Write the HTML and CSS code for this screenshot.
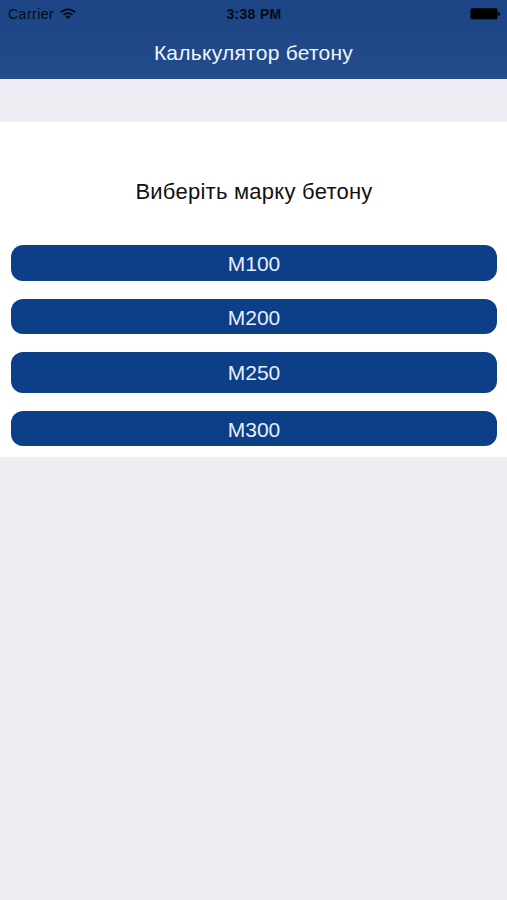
FILE: index.html
```
<!DOCTYPE html>
<html lang="uk">
<head>
  <meta charset="UTF-8">
  <title>Калькулятор бетону</title>
  <link rel="stylesheet" href="styles.css">
</head>
<body>

<header class="header">
  <div class="status-bar">
    <div class="carrier">
      <span class="carrier-name">Carrier</span>
      <svg class="wifi" viewBox="0 0 16 12" width="16" height="12">
        <g fill="none" stroke="#030b18" stroke-width="1.9">
          <path d="M1 4.2a10 10 0 0 1 14 0"/>
          <path d="M3.6 6.9a6.3 6.3 0 0 1 8.8 0"/>
        </g>
        <path d="M8 11.2L5.5 8.7a3.6 3.6 0 0 1 5 0z" fill="#030b18"/>
      </svg>
    </div>
    <span class="time">3:38 PM</span>
    <div class="battery-wrap">
      <svg width="30" height="12" viewBox="0 0 30 12">
        <rect x="0.5" y="0.3" width="27" height="11" rx="1.5" fill="#000"/>
        <path d="M28.2 4a2 2 0 0 1 0 4z" fill="#000"/>
      </svg>
    </div>
  </div>
  <h1 class="title">Калькулятор бетону</h1>
</header>

<main class="panel">
  <p class="prompt">Виберіть марку бетону</p>
  <div class="grades">
    <button class="grade">М100</button>
    <button class="grade">М200</button>
    <button class="grade grade-tall">М250</button>
    <button class="grade">М300</button>
  </div>
</main>

</body>
</html>
```
FILE: styles.css
```
body {
  margin: 0;
  min-height: 100vh;
  background: #efeef4;
  font-family: "Liberation Sans", Arial, sans-serif;
}

.header {
  height: 79px;
  background: linear-gradient(#1d4484, #234c8c);
}

/* Status bar */
.status-bar {
  display: grid;
  grid-template-columns: 1fr auto 1fr;
  align-items: center;
  height: 27px;
  padding: 0 7px 0 8px;
  font-size: 14px;
  line-height: 28px;
  color: #030b18;
}

.carrier {
  display: flex;
  align-items: center;
  gap: 6px;
}

.carrier-name {
  letter-spacing: 0.5px;
}

.time {
  font-weight: bold;
  font-size: 14px;
  letter-spacing: 0.3px;
}

.battery-wrap {
  display: flex;
  justify-content: flex-end;
}

.title {
  margin: 0;
  text-align: center;
  font-size: 21px;
  font-weight: normal;
  line-height: 52px;
  letter-spacing: 0.25px;
  color: #f0f5ff;
}

/* Panel */
.panel {
  box-sizing: border-box;
  height: 335px;
  margin-top: 43px;
  padding: 54px 10px 0 11px;
  background: #fff;
}

.prompt {
  margin: 0 0 37px;
  text-align: center;
  font-size: 22px;
  line-height: 32px;
  letter-spacing: 0.25px;
  color: #111;
}

.grades {
  display: flex;
  flex-direction: column;
  gap: 18px;
}

.grade {
  height: 35.5px;
  padding: 2px 0 0;
  border: none;
  border-radius: 12px;
  background: #0d3e88;
  font-family: inherit;
  font-size: 21px;
  line-height: 34px;
  color: #e6f0ff;
}

.grade-tall {
  height: 40.5px;
  line-height: 38px;
}
```
